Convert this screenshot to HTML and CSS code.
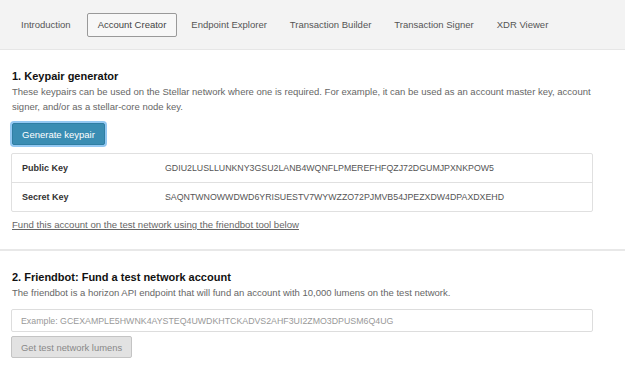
FILE: index.html
```html
<!DOCTYPE html>
<html lang="en">
<head>
    <meta charset="UTF-8">
    <title>Stellar Laboratory - Account Creator</title>
    <link rel="stylesheet" href="styles.css">
</head>
<body>
    <!-- Top navigation -->
    <nav class="topnav">
        <a class="nav-item first">Introduction</a>
        <a class="nav-item active">Account Creator</a>
        <a class="nav-item">Endpoint Explorer</a>
        <a class="nav-item">Transaction Builder</a>
        <a class="nav-item">Transaction Signer</a>
        <a class="nav-item">XDR Viewer</a>
    </nav>

    <!-- Keypair generator -->
    <section class="section section-first">
        <h2>1. Keypair generator</h2>
        <p class="desc">These keypairs can be used on the Stellar network where one is required. For example, it can be used as an account master key, account signer, and/or as a stellar-core node key.</p>
        <button class="btn-primary">Generate keypair</button>
        <div class="keytable">
            <div class="key-row">
                <span class="key-label">Public Key</span>
                <span class="key-value">GDIU2LUSLLUNKNY3GSU2LANB4WQNFLPMEREFHFQZJ72DGUMJPXNKPOW5</span>
            </div>
            <div class="key-row">
                <span class="key-label">Secret Key</span>
                <span class="key-value">SAQNTWNOWWDWD6YRISUESTV7WYWZZO72PJMVB54JPEZXDW4DPAXDXEHD</span>
            </div>
        </div>
        <a class="fund-link" href="#">Fund this account on the test network using the friendbot tool below</a>
    </section>

    <!-- Friendbot -->
    <section class="section">
        <h2>2. Friendbot: Fund a test network account</h2>
        <p class="desc">The friendbot is a horizon API endpoint that will fund an account with 10,000 lumens on the test network.</p>
        <input class="text-input" type="text" placeholder="Example: GCEXAMPLE5HWNK4AYSTEQ4UWDKHTCKADVS2AHF3UI2ZMO3DPUSM6Q4UG">
        <button class="btn-disabled">Get test network lumens</button>
    </section>
</body>
</html>
```

FILE: styles.css
```css
/* Basic Styles */
body {
    font-family: "Liberation Sans", Arial, sans-serif;
    background-color: #fff;
    color: #222;
    margin: 0;
    padding: 0;
}

/* Top navigation */
.topnav {
    display: flex;
    align-items: center;
    gap: 1px;
    height: 49px;
    padding: 0 10px;
    background-color: #f3f3f3;
    border-bottom: 1px solid #e6e6e6;
}

.nav-item {
    font-size: 9.5px;
    color: #555;
    padding: 5px 10px 6px;
    border: 1px solid transparent;
    border-radius: 2px;
    cursor: pointer;
}

.nav-item.first {
    margin-right: 4px;
}

.nav-item.active {
    border-color: #999;
    background-color: #f7f7f7;
    color: #444;
    margin-right: 2px;
}

/* Sections */
.section {
    padding: 18px 11px 20px;
}

.section-first {
    padding-bottom: 17px;
    border-bottom: 2px solid #e8e8e8;
}

h2 {
    font-size: 11px;
    font-weight: bold;
    color: #111;
    margin: 0 0 0 1px;
    line-height: 16px;
}

.desc {
    font-size: 9.5px;
    color: #666;
    line-height: 15px;
    margin: 0 0 9px 1px;
}

/* Buttons */
.btn-primary {
    display: block;
    font-family: inherit;
    font-size: 9.5px;
    white-space: nowrap;
    color: #fff;
    background-color: #3a8db3;
    border: 1px solid #2f7ea3;
    border-radius: 2px;
    box-shadow: 0 0 0 2px #93c8f2;
    padding: 0 9px;
    height: 22px;
    margin: 1px 0 8px 1px;
    cursor: pointer;
}

.btn-disabled {
    display: block;
    font-family: inherit;
    font-size: 9.4px;
    white-space: nowrap;
    color: #888;
    background-color: #e2e2e2;
    border: 1px solid #c4c4c4;
    border-radius: 2px;
    padding: 0 9px;
    height: 22px;
    margin-top: 4px;
}

/* Key table */
.keytable {
    width: 580px;
    border: 1px solid #e0e0e0;
    border-radius: 2px;
    margin-bottom: 2px;
}

.key-row {
    display: flex;
    align-items: center;
    height: 28px;
}

.key-row + .key-row {
    border-top: 1px solid #e0e0e0;
}

.key-label {
    width: 143px;
    padding-left: 10px;
    font-size: 9px;
    font-weight: bold;
    color: #333;
}

.key-value {
    font-size: 8.8px;
    color: #555;
}

.fund-link {
    font-size: 9.6px;
    color: #666;
    text-decoration: underline;
    margin-left: 1px;
}

/* Friendbot input */
.text-input {
    display: block;
    box-sizing: border-box;
    width: 582px;
    height: 23px;
    font-family: inherit;
    font-size: 8.8px;
    padding: 0 9px;
    border: 1px solid #ddd;
    border-radius: 2px;
    margin-top: 3px;
}

.text-input::placeholder {
    color: #999;
}
```
